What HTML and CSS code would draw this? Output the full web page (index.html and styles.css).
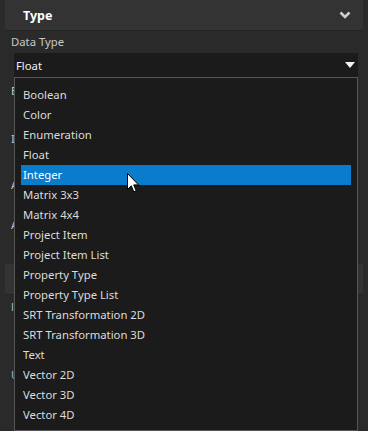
FILE: index.html
```html
<!DOCTYPE html>
<html>

<head>
    <title> Type Inspector </title>
    <link rel="stylesheet" href="styles.css">
</head>

<body>
    <div class="panel">
        <div class="section-header">
            <span class="section-title">Type</span>
            <svg class="chevron" width="12" height="8" viewBox="0 0 12 8">
                <path d="M1.5 1.5 L6 6 L10.5 1.5" fill="none" stroke="#cfcfcf" stroke-width="2.6" />
            </svg>
        </div>

        <p class="field-label">Data Type</p>
        <div class="select">
            <span>Float</span>
            <svg width="10" height="6" viewBox="0 0 10 6">
                <path d="M0 0 H10 L5 6 Z" fill="#f2f2f2" />
            </svg>
        </div>

        <!-- rows behind the open list, only their first letters peek out -->
        <p class="field-label row-e">E</p>
        <p class="field-label row-i">I</p>
        <p class="field-label row-a">A</p>
        <p class="field-label row-a2">A</p>
        <div class="section-header second"></div>
        <p class="field-label link row-l">l</p>
        <p class="field-label link row-u">U</p>

        <div class="popup">
            <div class="item">Boolean</div>
            <div class="item">Color</div>
            <div class="item">Enumeration</div>
            <div class="item">Float</div>
            <div class="item selected">Integer</div>
            <div class="item">Matrix 3x3</div>
            <div class="item">Matrix 4x4</div>
            <div class="item">Project Item</div>
            <div class="item">Project Item List</div>
            <div class="item">Property Type</div>
            <div class="item">Property Type List</div>
            <div class="item">SRT Transformation 2D</div>
            <div class="item">SRT Transformation 3D</div>
            <div class="item">Text</div>
            <div class="item">Vector 2D</div>
            <div class="item">Vector 3D</div>
            <div class="item">Vector 4D</div>
        </div>

        <!-- mouse pointer -->
        <svg class="pointer" width="12" height="20" viewBox="0 0 12 20">
            <path d="M0.5 0.5 V16.5 L4.3 12.8 L6.8 18.8 L9.2 17.8 L6.7 11.9 H11.5 Z" fill="#fff" stroke="#000" stroke-width="1" />
        </svg>
    </div>
</body>

</html>
```

FILE: styles.css
```css
body {
    background-color: #2a2a2a;
    color: #dcdcdc;
    font-family: "Noto Sans", "Open Sans", sans-serif;
    font-size: 11.3px;
    margin: 0;
    padding: 0;
}

.panel {
    position: relative;
    width: 368px;
    height: 431px;
    overflow: hidden;
}

.section-header {
    margin: 0 5px;
    height: 30px;
    background-color: #333333;
    border-bottom: 1px solid #232323;
    display: flex;
    align-items: center;
    justify-content: space-between;
    padding: 0 12px 0 18px;
}

.section-title {
    color: #ffffff;
    font-weight: bold;
    font-size: 12.5px;
}

.field-label {
    margin: 3px 0 0 0;
    padding-left: 11px;
    line-height: 16px;
    color: #c8c8c8;
}

.select {
    margin: 3px 10px 0 14px;
    height: 24px;
    background-color: #1b1b1b;
    color: #f0f0f0;
    display: flex;
    align-items: center;
    justify-content: space-between;
    padding: 0 3px 0 2px;
}

.row-e { margin-top: 6px; }
.row-i { margin-top: 32px; }
.row-a { margin-top: 30px; }
.row-a2 { margin-top: 24px; }

.second {
    margin-top: 31px;
}

.row-l { margin-top: 4px; }
.row-u { margin-top: 52px; }

.link {
    color: #9fb4d0;
}

.popup {
    position: absolute;
    left: 14px;
    top: 77px;
    width: 344px;
    height: 354px;
    box-sizing: border-box;
    background-color: #1b1b1b;
    border: 1px solid #565656;
    padding: 7px 6px 0 6px;
}

.item {
    height: 20px;
    line-height: 20px;
    padding-left: 2px;
    color: #dcdcdc;
}

.selected {
    background-color: #0a7ccc;
    color: #ffffff;
}

.pointer {
    position: absolute;
    left: 127px;
    top: 173px;
}
```
